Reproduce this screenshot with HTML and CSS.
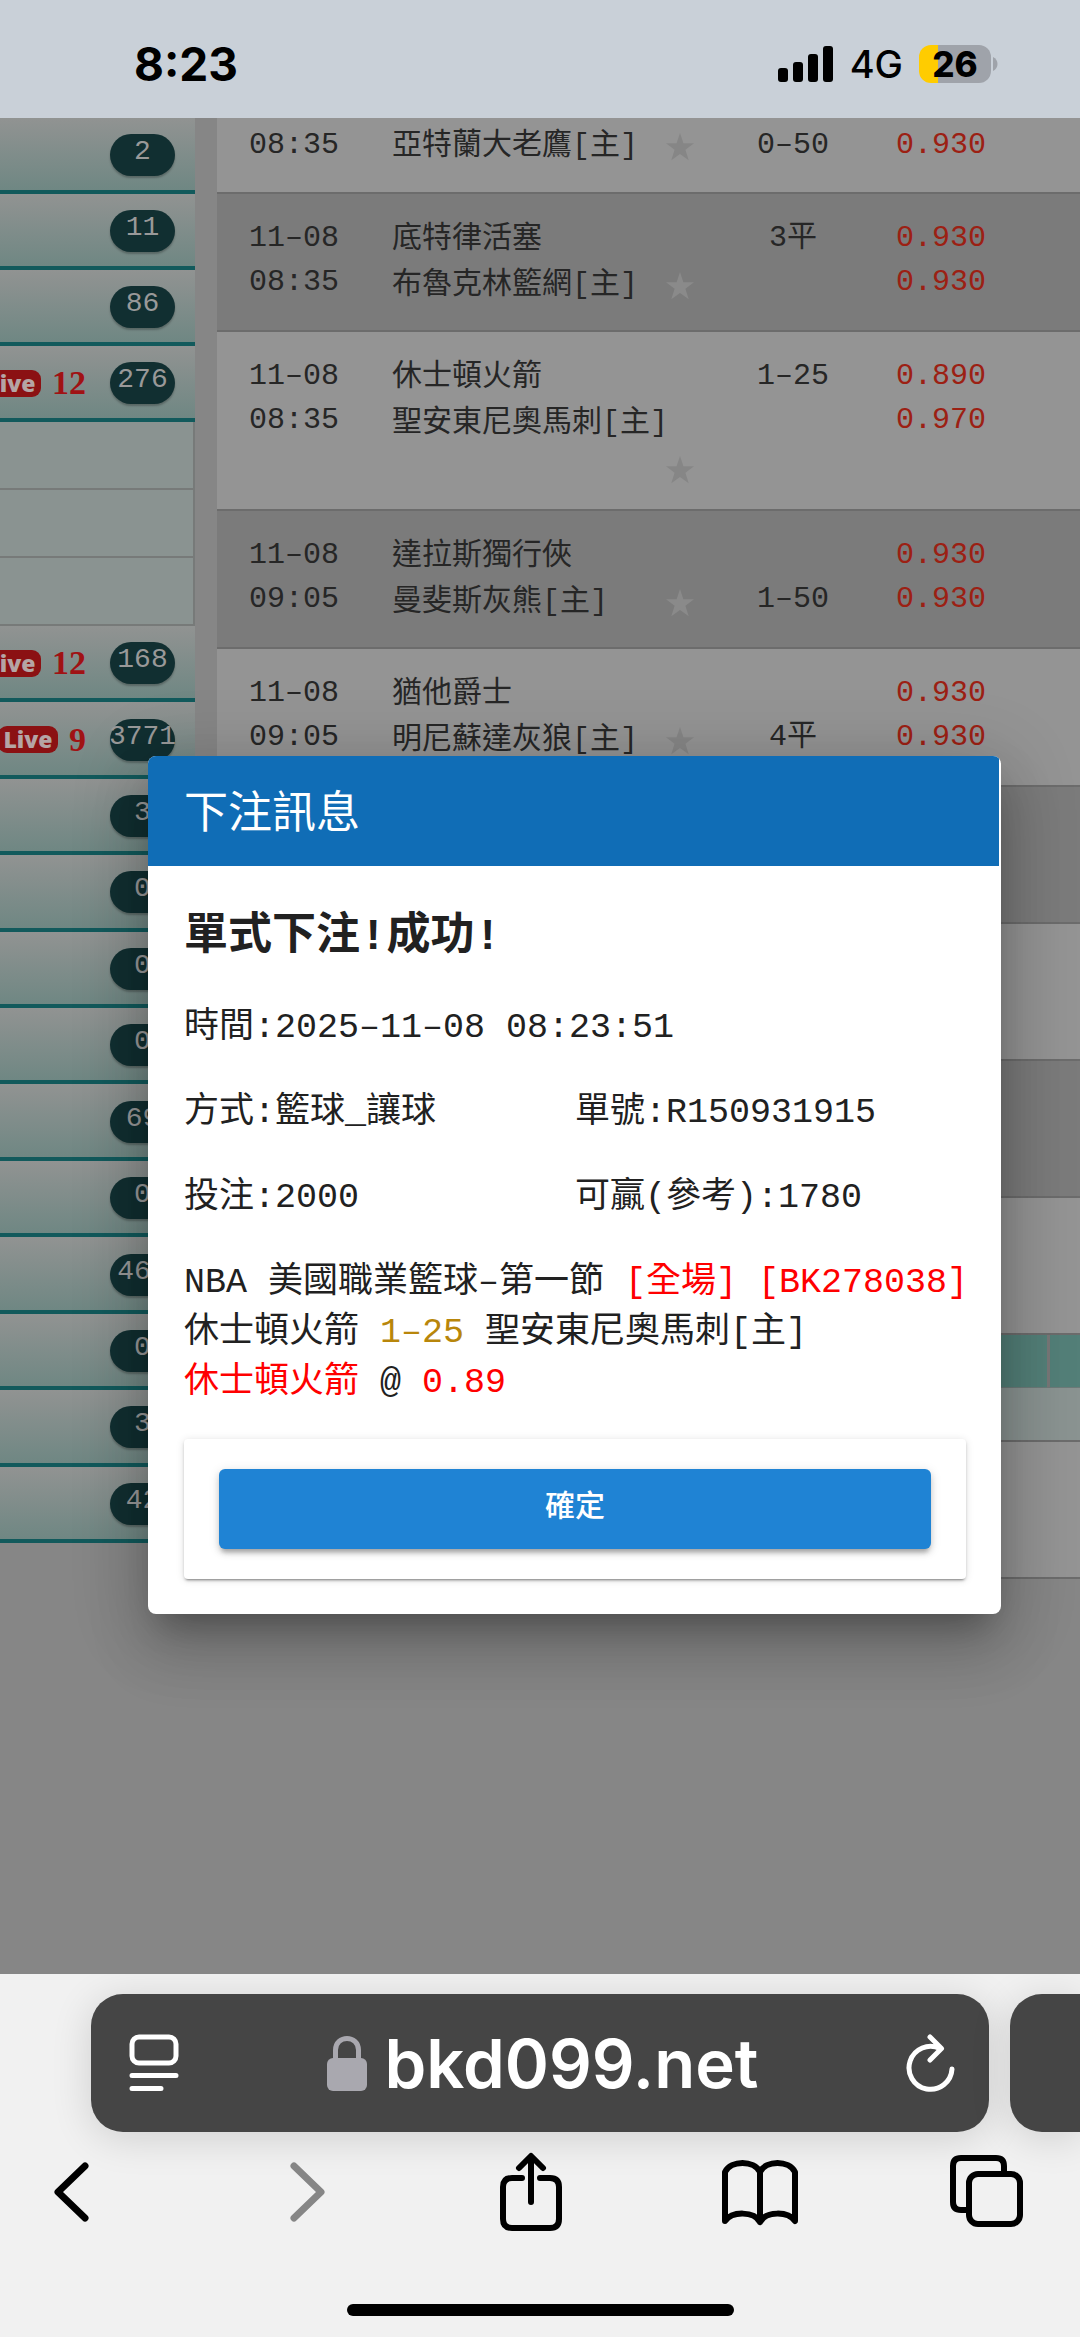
FILE: index.html
```html
<!DOCTYPE html>
<html lang="zh-Hant">
<head>
<meta charset="utf-8">
<meta name="viewport" content="width=device-width, initial-scale=1">
<title>下注訊息</title>
<link rel="stylesheet" href="styles.css">
</head>
<body>
<svg class="defs" aria-hidden="true">
  <symbol id="star" viewBox="0 0 28 28"><path d="M14 0l3.4 10.2H28l-8.600 6.500 3.300 10.600L14 21l-8.700 6.300 3.300-10.600L0 10.200h10.600z"/></symbol>
</svg>

<header class="status">
  <span class="clock">8:23</span>
  <div class="status-right">
    <svg width="56" height="36" viewBox="0 0 56 36" aria-hidden="true"><rect x="0" y="22" width="10" height="14" rx="3"/><rect x="15" y="16" width="10" height="20" rx="3"/><rect x="30" y="8" width="10" height="28" rx="3"/><rect x="45" y="0" width="10" height="36" rx="3"/></svg>
    <span class="network">4G</span>
    <span class="battery">26</span>
    <svg class="battery-cap" width="5" height="14" viewBox="0 0 5 14" aria-hidden="true"><path d="M0 0c6 3 6 11 0 14z"/></svg>
  </div>
</header>

<main class="page">
  <nav class="sidebar">
    <div class="group group-top">
      <div class="sport"><span class="count">2</span></div>
      <div class="sport"><span class="count">11</span></div>
      <div class="sport"><span class="count">86</span></div>
      <div class="sport"><span class="live">Live</span><b class="live-count">12</b><span class="count">276</span></div>
    </div>
    <div class="sub"></div>
    <div class="sub"></div>
    <div class="sub"></div>
    <div class="group group-rest">
      <div class="sport"><span class="live">Live</span><b class="live-count">12</b><span class="count">168</span></div>
      <div class="sport"><span class="live">Live</span><b class="live-count">9</b><span class="count">3771</span></div>
      <div class="sport"><span class="count">3</span></div>
      <div class="sport"><span class="count">0</span></div>
      <div class="sport"><span class="count">0</span></div>
      <div class="sport"><span class="count">0</span></div>
      <div class="sport"><span class="count">69</span></div>
      <div class="sport"><span class="count">0</span></div>
      <div class="sport"><span class="count">467</span></div>
      <div class="sport"><span class="count">0</span></div>
      <div class="sport"><span class="count">3</span></div>
      <div class="sport"><span class="count">42</span></div>
    </div>
  </nav>

  <table class="odds">
    <colgroup><col class="c-time"><col class="c-team"><col class="c-line"><col class="c-odds"><col class="c-edge"><col></colgroup>
    <tbody>
      <tr class="first"><td>08:35</td><td class="team"><div class="home"><span>亞特蘭大老鷹[主]</span><svg class="star"><use href="#star"/></svg></div></td><td>0–50</td><td class="price">0.930</td><td></td><td></td></tr>
      <tr class="alt"><td>11–08<br>08:35</td><td class="team">底特律活塞<div class="home"><span>布魯克林籃網[主]</span><svg class="star"><use href="#star"/></svg></div></td><td>3平</td><td class="price">0.930<br>0.930</td><td></td><td></td></tr>
      <tr><td>11–08<br>08:35</td><td class="team">休士頓火箭<div class="home"><span>聖安東尼奧馬刺[主]</span><svg class="star"><use href="#star"/></svg></div></td><td>1–25</td><td class="price">0.890<br>0.970</td><td></td><td></td></tr>
      <tr class="alt"><td>11–08<br>09:05</td><td class="team">達拉斯獨行俠<div class="home"><span>曼斐斯灰熊[主]</span><svg class="star"><use href="#star"/></svg></div></td><td><br>1–50</td><td class="price">0.930<br>0.930</td><td></td><td></td></tr>
      <tr><td>11–08<br>09:05</td><td class="team">猶他爵士<div class="home"><span>明尼蘇達灰狼[主]</span><svg class="star"><use href="#star"/></svg></div></td><td><br>4平</td><td class="price">0.930<br>0.930</td><td></td><td></td></tr>
      <tr class="alt empty"><td colspan="6"></td></tr>
      <tr class="empty"><td colspan="6"></td></tr>
      <tr class="alt empty"><td colspan="6"></td></tr>
      <tr class="empty"><td colspan="6"></td></tr>
      <tr class="league"><td colspan="5"></td><td></td></tr>
      <tr class="period"><td colspan="6"></td></tr>
      <tr class="empty"><td colspan="6"></td></tr>
    </tbody>
  </table>

  <div class="overlay">
    <section class="dialog" role="dialog" aria-labelledby="dialog-title">
      <h1 class="dialog-title" id="dialog-title">下注訊息</h1>
      <div class="dialog-body">
        <h2 class="result">單式下注!成功!</h2>
        <div class="fields">
          <div class="wide">時間:2025–11–08 08:23:51</div>
          <div>方式:籃球_讓球</div>
          <div>單號:R150931915</div>
          <div>投注:2000</div>
          <div>可贏(參考):1780</div>
        </div>
        <p class="bet">NBA 美國職業籃球–第一節 <span class="red">[全場] [BK278038]</span><br>休士頓火箭 <span class="gold">1–25</span> 聖安東尼奧馬刺[主]<br><span class="red">休士頓火箭</span> @ <span class="red">0.89</span></p>
        <div class="actions"><button class="confirm" type="button">確定</button></div>
      </div>
    </section>
  </div>
</main>

<footer class="browser">
  <div class="tabs">
    <div class="address">
      <button type="button" aria-label="Page menu"><svg width="50" height="58" viewBox="0 0 50 58" fill="none" stroke="#fff" stroke-width="5" stroke-linecap="round"><rect x="3" y="3" width="44" height="26" rx="7"/><path d="M3 41.500h44M3 54.500h29"/></svg></button>
      <a class="site" href="#"><svg width="40" height="56" viewBox="0 0 40 56" aria-hidden="true"><rect x="0" y="23" width="40" height="33" rx="6" fill="#a9a8af"/><path d="M8.500 25V15C8.500-.500 31.500-.500 31.500 15v10" fill="none" stroke="#a9a8af" stroke-width="5"/></svg><span>bkd099.net</span></a>
      <button type="button" aria-label="Reload"><svg width="50" height="60" viewBox="0 0 50 60" fill="none" stroke="#fff" stroke-width="5" stroke-linecap="round" stroke-linejoin="round"><path d="M46 36A21.500 21.500 0 1 1 34 15.500M24 4l11.500 11.500L24 27"/></svg></button>
    </div>
    <div class="next-tab"></div>
  </div>
  <div class="tools">
    <button type="button" aria-label="Back"><svg width="80" height="80" viewBox="0 0 80 80"><path d="M53 14L26 40l27 26" stroke-width="7"/></svg></button>
    <button type="button" aria-label="Forward"><svg class="muted" width="80" height="80" viewBox="0 0 80 80"><path d="M33 14l27 26-27 26" stroke-width="7"/></svg></button>
    <button type="button" aria-label="Share"><svg width="80" height="80" viewBox="0 0 80 80"><path d="M33 26H23q-9 0-9 9v32q0 9 9 9h38q9 0 9-9V35q0-9-9-9H51M42 50V5M30 16L42 4l12 12"/></svg></button>
    <button type="button" aria-label="Bookmarks"><svg width="80" height="80" viewBox="0 0 80 80"><path d="M42 20C36 8 13 8 7 20v49c7-10 29-10 35 1 6-11 28-11 35-1V20C71 8 48 8 42 20zm0 0v50"/></svg></button>
    <button type="button" aria-label="Tabs"><svg width="80" height="80" viewBox="0 0 80 80"><path d="M22 58H15q-8 0-8-8V14q0-8 8-8h35q8 0 8 8v8"/><rect x="23" y="22" width="51" height="50" rx="9"/></svg></button>
  </div>
  <div class="home-bar"></div>
</footer>
</body>
</html>
```
FILE: styles.css
```css
* { box-sizing: border-box; }

body {
  margin: 0;
  min-height: 100vh;
  display: flex;
  flex-direction: column;
  background: #f1f1f1;
  color: #212121;
  font-family: "Liberation Mono", "Noto Sans CJK TC", monospace;
  font-size: 30px;
}

button {
  margin: 0;
  padding: 0;
  border: 0;
  background: none;
  font: inherit;
  color: inherit;
}

svg { display: block; }
.defs { display: none; }

/* Status bar */
.status {
  height: 118px;
  display: flex;
  align-items: center;
  justify-content: space-between;
  padding: 10px 82px 0 134px;
  background: #c9d0d8;
  color: #000;
  font-family: Inter, "Liberation Sans", sans-serif;
}
.clock { font-size: 46px; font-weight: 700; }
.status-right { display: flex; align-items: center; }
.network { margin: 0 16px; font-size: 38px; font-weight: 500; }
.battery {
  width: 72px;
  height: 38px;
  border-radius: 12px;
  background: linear-gradient(90deg, #ffcc00 19px, #9fa3aa 19px);
  font-size: 35px;
  font-weight: 800;
  line-height: 38px;
  text-align: center;
}
.battery-cap { margin-left: 2px; fill: #9fa3aa; }

/* Page behind the dialog */
.page {
  position: relative;
  flex: 1;
  display: flex;
  align-items: flex-start;
  gap: 22px;
  overflow: hidden;
  background: #868686;
}

.sidebar { width: 195px; flex: none; overflow: hidden; }
.group { display: grid; grid-template-columns: minmax(0, 1fr); grid-auto-rows: 1fr; }
.group-top { height: 304px; }
.group-rest { height: 917px; }
.sport {
  display: flex;
  align-items: center;
  justify-content: flex-end;
  padding: 2px 20px 0 0;
  border-bottom: 4px solid #125a5c;
  background: linear-gradient(#919392, #6f8783);
}
.count {
  width: 65px;
  height: 42px;
  flex: none;
  display: flex;
  justify-content: center;
  border-radius: 21px;
  background: #112f31;
  box-shadow: 0 2px 2px rgba(0, 0, 0, .25);
  color: #999;
  font-size: 28px;
  line-height: 36px;
}
.live {
  width: 60px;
  flex: none;
  border-radius: 9px;
  background: #8b1113;
  color: #b5a5a5;
  font: 800 23px/27px "Open Sans", sans-serif;
  text-align: center;
}
.live-count {
  margin: 0 24px 0 11px;
  color: #a01214;
  font: 700 34px/40px "Liberation Serif", serif;
}
.sub {
  height: 68px;
  border: solid #777a79;
  border-width: 0 2px 2px 0;
  background: #8a9391;
}

.odds {
  flex: 1;
  min-width: 0;
  table-layout: fixed;
  border-collapse: separate;
  border-spacing: 0;
  color: #262626;
  line-height: 44px;
}
.c-time { width: 154px; }
.c-team { width: 344px; }
.c-line { width: 156px; }
.c-odds { width: 140px; }
.c-edge { width: 36px; }
.odds tr { height: 138px; background: #949494; }
.odds .alt { background: #7b7b7b; }
.odds .first { height: 76px; }
.odds .empty { height: 137px; }
.odds td {
  padding: 22px 0 17px;
  border-bottom: 2px solid #6c6c6c;
  text-align: center;
  vertical-align: top;
}
.odds .first td { padding-top: 5px; padding-bottom: 0; }
.odds .team { padding-left: 21px; padding-right: 21px; text-align: left; line-height: 46px; }
.home { display: flex; flex-wrap: wrap; justify-content: space-between; }
.star { width: 28px; height: 46px; margin-left: auto; padding-top: 2px; fill: #868686; }
.alt .star { fill: #8a8a8a; }
.odds .price { color: #9c2013; }
.odds .league { height: 53px; background: #537f78; }
.odds .league td { padding: 0; border-bottom: 1px solid #6c7a78; }
.odds .league td + td { border-left: 3px solid #777; }
.odds .period { height: 54px; background: #8a9391; }
.odds .period td { padding: 0; }

/* Dialog */
.overlay {
  position: absolute;
  inset: 0;
  padding: 638px 79px 0 148px;
}
.dialog {
  overflow: hidden;
  border-radius: 8px;
  background: #fff;
  box-shadow: 0 22px 30px -14px rgba(0, 0, 0, .25), 0 36px 60px 4px rgba(0, 0, 0, .14), 0 10px 70px 12px rgba(0, 0, 0, .14);
}
.dialog-title {
  margin: 0 2px 0 0;
  padding: 10px 36px 0;
  background: #106db6;
  color: #fff;
  font-size: 44px;
  font-weight: 400;
  line-height: 100px;
}
.dialog-body { padding: 38px 35px 35px 36px; font-size: 35px; line-height: 50px; }
.result { margin: 0 0 33px; font-size: 44px; font-weight: 700; line-height: 66px; }
.fields { display: grid; grid-template-columns: 1fr 1fr; row-gap: 35px; }
.wide { grid-column: 1 / -1; }
.bet { margin: 35px 0 31px; white-space: nowrap; }
.red { color: #f00; }
.gold { color: #b8860b; }
.actions {
  padding: 30px 35px;
  border-radius: 4px;
  box-shadow: 0 3px 2px -2px rgba(0, 0, 0, .3), 0 2px 3px rgba(0, 0, 0, .16), 0 1px 8px rgba(0, 0, 0, .12);
}
.confirm {
  display: block;
  width: 100%;
  height: 80px;
  padding-bottom: 12px;
  border-radius: 6px;
  background: #1f83d4;
  box-shadow: 0 6px 4px -3px rgba(0, 0, 0, .2), 0 4px 6px rgba(0, 0, 0, .14), 0 2px 12px rgba(0, 0, 0, .12);
  color: #fff;
  font-family: "Noto Sans CJK TC", sans-serif;
  font-size: 30px;
  font-weight: 500;
}

/* Browser toolbar */
.browser {
  height: 363px;
  display: flex;
  flex-direction: column;
  align-items: stretch;
  padding-top: 20px;
  overflow: hidden;
  color: #000;
}
.tabs { display: flex; gap: 21px; padding-left: 91px; }
.address, .next-tab {
  height: 138px;
  background: #454545;
  box-shadow: 0 6px 40px rgba(0, 0, 0, .14);
}
.address {
  flex: 1;
  display: flex;
  align-items: center;
  justify-content: space-between;
  padding: 0 33px 0 38px;
  border-radius: 32px;
}
.next-tab { width: 70px; border-radius: 32px 0 0 32px; }
.site {
  display: flex;
  align-items: center;
  gap: 18px;
  color: #fff;
  font-family: Inter, "Liberation Sans", sans-serif;
  font-size: 67px;
  font-weight: 600;
  text-decoration: none;
}
.tools { display: flex; justify-content: space-between; padding: 20px 54px 0 32px; }
.tools svg { fill: none; stroke: #000; stroke-width: 6; stroke-linecap: round; stroke-linejoin: round; }
.tools .muted { stroke: #868686; }
.home-bar {
  width: 387px;
  height: 12px;
  margin: 72px auto 0;
  border-radius: 6px;
  background: #000;
}
```
